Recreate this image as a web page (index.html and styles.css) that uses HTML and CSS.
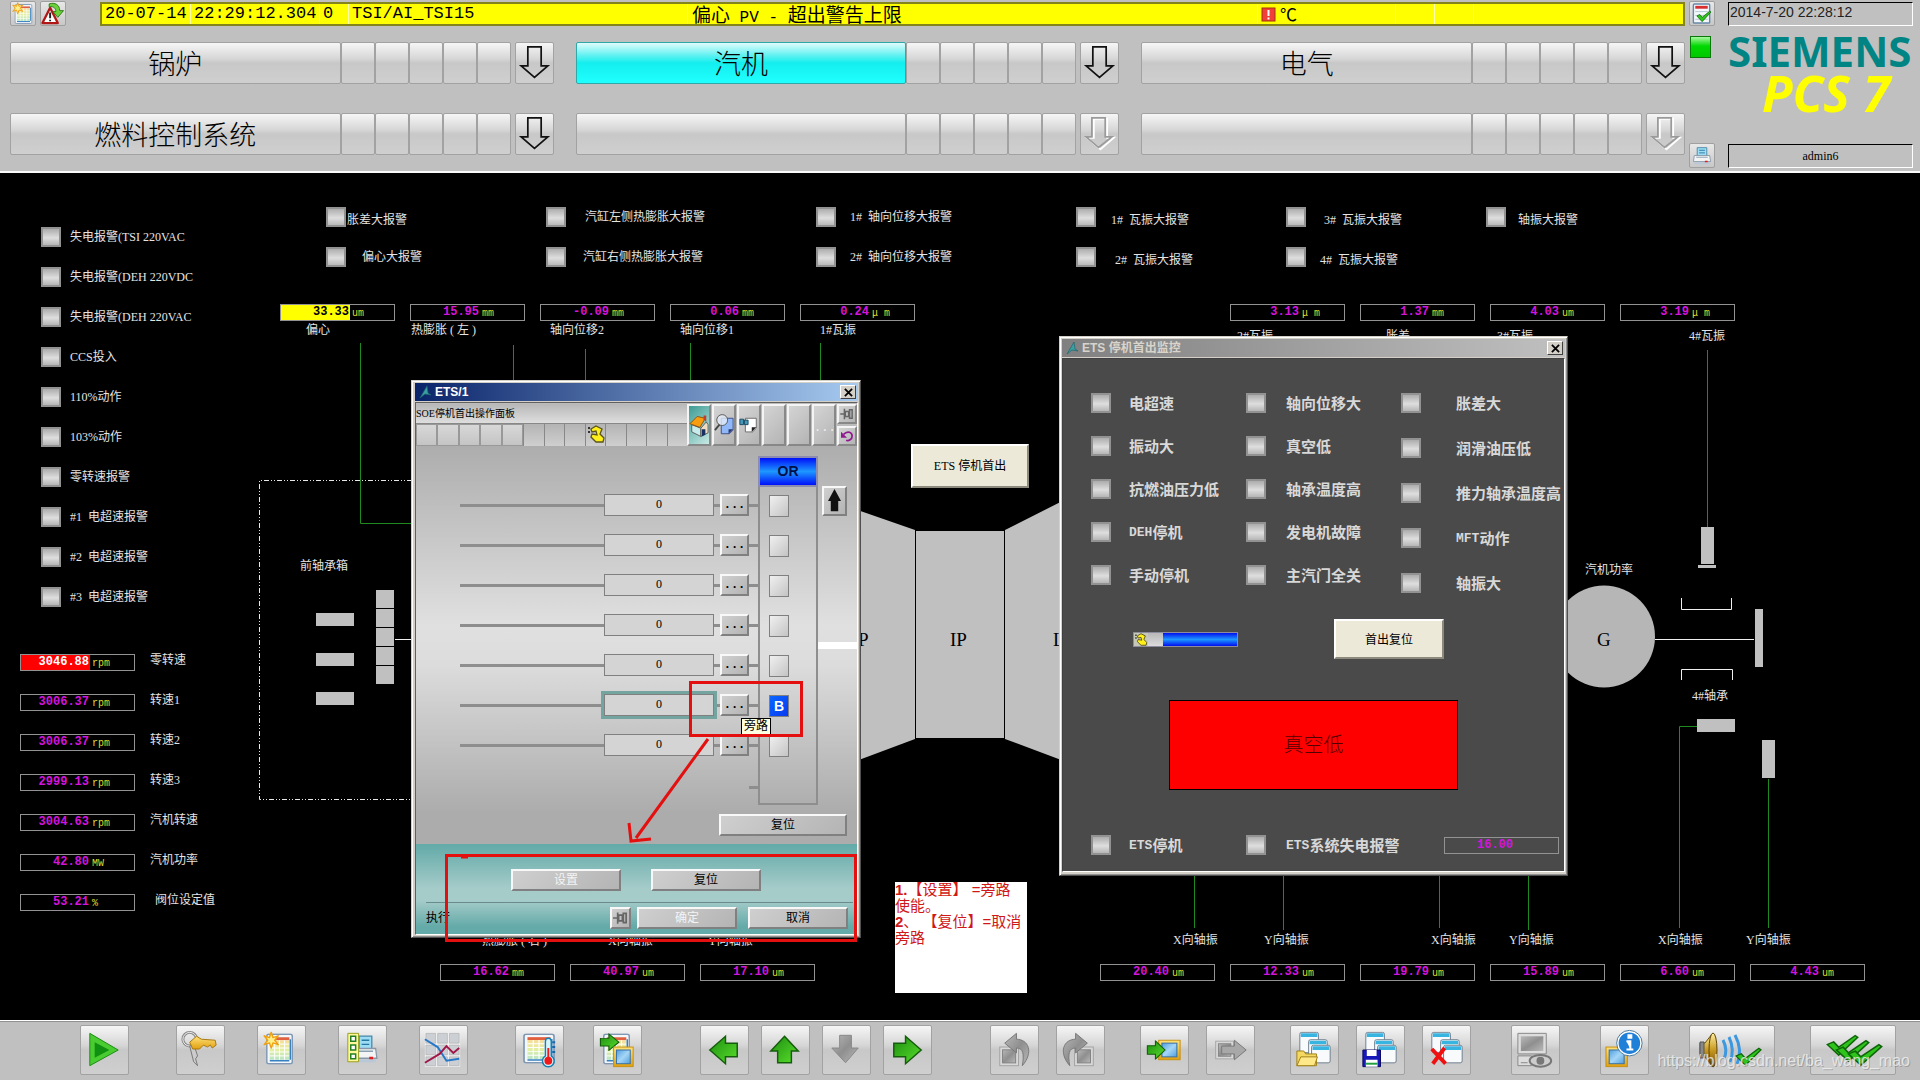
FILE: index.html
```html
<!DOCTYPE html>
<html lang="zh-CN">
<head>
<meta charset="utf-8">
<title>SIEMENS PCS 7</title>
<link rel="stylesheet" href="styles.css">
</head>
<body>
<svg class="defs" aria-hidden="true">
  <defs>
    <linearGradient id="green" x1="0" y1="0" x2="1" y2="1"><stop offset="0" stop-color="#1c8c10"/><stop offset="1" stop-color="#5ae02c"/></linearGradient>
    <linearGradient id="gold" x1="0" y1="0" x2="0" y2="1"><stop offset="0" stop-color="#ffe27a"/><stop offset="1" stop-color="#e0a010"/></linearGradient>
    <linearGradient id="brass" x1="0" y1="0" x2="0" y2="1"><stop offset="0" stop-color="#fff0a0"/><stop offset=".5" stop-color="#c89820"/><stop offset="1" stop-color="#705008"/></linearGradient>
    <linearGradient id="sky" x1="0" y1="0" x2="1" y2="1"><stop offset="0" stop-color="#4f9fe0"/><stop offset=".5" stop-color="#a5d6f6"/><stop offset="1" stop-color="#4f9fe0"/></linearGradient>
    <linearGradient id="cells" x1="0" y1="0" x2="0" y2="1"><stop offset="0" stop-color="#f8dc9a"/><stop offset=".5" stop-color="#e2f0a0"/><stop offset="1" stop-color="#b8e4c8"/></linearGradient>
    <linearGradient id="grey" x1="0" y1="0" x2="1" y2="1"><stop offset="0" stop-color="#b8b8b8"/><stop offset=".5" stop-color="#8f8f8f"/><stop offset="1" stop-color="#b8b8b8"/></linearGradient>
    <linearGradient id="lampfill" x1="0" y1="0" x2="0" y2="1"><stop offset="0" stop-color="#a8a8a8"/><stop offset=".55" stop-color="#dedede"/><stop offset="1" stop-color="#b4b4b4"/></linearGradient>
    <symbol id="sheet" viewBox="0 0 28 32" preserveAspectRatio="none">
      <rect x="1" y="1" width="26" height="30" rx="2" fill="#f4f8fc" stroke="#8098b4" stroke-width="1.5"/>
      <rect x="4" y="4" width="20" height="3" fill="#e06040"/>
      <rect x="4" y="7" width="20" height="20" fill="url(#cells)"/>
      <path d="M4 11H24M4 15H24M4 19H24M4 23H24M9 7V27M14 7V27M19 7V27" stroke="#fff" stroke-width="1"/>
      <path d="M4 28H24M25 6V27" stroke="#3880c0" stroke-width="1.5"/>
    </symbol>
    <symbol id="star" viewBox="0 0 20 20">
      <path d="M10 1L12 7L18 5L14 10L18 15L12 13L10 19L8 13L2 15L6 10L2 5L8 7Z" fill="#fff08a" stroke="#f0a010" stroke-width="1.6" stroke-linejoin="round"/>
    </symbol>
    <symbol id="frame" viewBox="0 0 22 22" preserveAspectRatio="none">
      <rect x="1" y="1" width="20" height="20" fill="url(#gold)" stroke="#c89010"/>
      <rect x="4" y="4" width="14" height="14" fill="url(#sky)" stroke="#3870a8"/>
    </symbol>
    <symbol id="frame-off" viewBox="0 0 22 22">
      <rect x="1" y="1" width="20" height="20" fill="#d8d8d8" stroke="#a0a0a0"/>
      <rect x="4" y="4" width="14" height="14" fill="url(#grey)" stroke="#808080"/>
    </symbol>
    <symbol id="go" viewBox="0 0 28 28" preserveAspectRatio="none">
      <path d="M2 8H13V1L26 14L13 27V20H2Z" fill="url(#green)" stroke="#155c0c" stroke-width="1.5"/>
    </symbol>
    <symbol id="tick" viewBox="0 0 26 26" preserveAspectRatio="none">
      <path d="M1 13L6 10L10 16L23 3L25 5L10 25Z" fill="#2ec41c" stroke="#0e6408" stroke-width="1.4"/>
    </symbol>
    <symbol id="panes" viewBox="0 0 34 36" preserveAspectRatio="none">
      <g fill="#f8fafc" stroke="#6c7c8c"><rect x="2" y="1" width="19" height="22" rx="2"/><rect x="11" y="9" width="19" height="20" rx="2"/><rect x="14" y="15" width="19" height="19" rx="2"/></g>
      <path d="M3 4H20M12 12H29M15 18H32" stroke="#38b4e0" stroke-width="4"/>
    </symbol>
    <symbol id="printer" viewBox="0 0 20 22" preserveAspectRatio="none">
      <path d="M5 2H15V12H5Z" fill="#9cdcf4" stroke="#4888a8"/><path d="M7 5H13M7 8H13" stroke="#2878a0"/>
      <path d="M2 11H18L19 18H1Z" fill="#f4f4f4" stroke="#8898a8"/><path d="M4 13H16" stroke="#88a0b0"/><path d="M13 18H16" stroke="#e02020" stroke-width="2"/><path d="M2 20H18" stroke="#b8c8d8" stroke-width="2"/>
    </symbol>
    <symbol id="pin" viewBox="0 0 16 14">
      <path d="M0 7H5M5 1V13M6 4H10V10H6ZM11 2H14V12H11Z" fill="none" stroke="#666" stroke-width="1.8"/>
    </symbol>
    <symbol id="hand" viewBox="0 0 18 18">
      <path d="M1 3H3M1 7H3" stroke="#333" stroke-width="2"/>
      <path d="M4 4L9 1L15 4L13 9L17 13L16 17H9L4 12L5 9L10 10L9 6L5 7Z" fill="#fff01c" stroke="#5a5418" stroke-width="1.3"/>
    </symbol>
    <symbol id="mark" viewBox="0 0 12 14">
      <path d="M1 13L8 1L9 8L12 10L6 9Z" fill="#3aa0a0" stroke="#1c6470" stroke-width=".7"/>
    </symbol>
    <symbol id="down" viewBox="0 0 38 42">
      <path d="M12 4H26V24H33L19 36L5 24H12Z" fill="none" stroke="#111" stroke-width="1.8"/>
    </symbol>
    <symbol id="down-off" viewBox="0 0 38 42">
      <path d="M13 5H27V25H34L20 37L6 25H13Z" fill="none" stroke="#fff" stroke-width="2"/>
      <path d="M11 4H25V24H32L18 35L5 24H11Z" fill="none" stroke="#9a9a9a" stroke-width="1.8"/>
    </symbol>
    <symbol id="lamp" viewBox="0 0 20 20">
      <rect x="1" y="1" width="18" height="18" fill="url(#lampfill)" stroke="#929292" stroke-width="2"/>
    </symbol>
  </defs>
</svg>

<header class="overview">
  <div class="overview-main">
    <div class="alarm-row">
      <button class="mini" aria-label="报警列表"><svg viewBox="0 0 24 24"><use href="#sheet" x="3" y="2" width="19" height="21"/><use href="#star" x="0" y="0" width="13" height="13"/></svg></button>
      <button class="mini" aria-label="报警回路"><svg viewBox="0 0 24 24"><path d="M9 6L17 22H1Z" fill="#fff" stroke="#b01818" stroke-width="2.4" stroke-linejoin="round"/><path d="M9 11V17M9 18.500V20" stroke="#222" stroke-width="2"/><path d="M8 2C14 0 19 3 19 9H23L17 16L12 10H15C15 7 13 4 8 5Z" fill="#6cd03c" stroke="#2c7c14"/></svg></button>
      <div class="alarm-line">
        <span class="a-date">20-07-14</span><span class="a-time">22:29:12.304</span><span class="a-num">0</span><span class="a-tag">TSI/AI_TSI15</span><span class="a-text">偏心<span class="ascii"> PV - </span>超出警告上限</span>
        <span class="a-unit"><svg width="15" height="15" viewBox="0 0 15 15"><rect x="1" y="1" width="13" height="13" fill="#f04038" stroke="#a03010"/><path d="M7.500 3V9M7.500 10.500V12.500" stroke="#fff" stroke-width="2"/></svg>℃</span><span class="a-gap"></span><span class="a-gap"></span><span class="a-rest"></span>
      </div>
    </div>
    <nav class="areas">
      <div class="area"><button class="area-name">锅炉</button><i></i><i></i><i></i><i></i><i></i><button class="area-down" aria-label="展开"><svg><use href="#down"/></svg></button></div>
      <div class="area"><button class="area-name active">汽机</button><i></i><i></i><i></i><i></i><i></i><button class="area-down" aria-label="展开"><svg><use href="#down"/></svg></button></div>
      <div class="area"><button class="area-name">电气</button><i></i><i></i><i></i><i></i><i></i><button class="area-down" aria-label="展开"><svg><use href="#down"/></svg></button></div>
      <div class="area"><button class="area-name">燃料控制系统</button><i></i><i></i><i></i><i></i><i></i><button class="area-down" aria-label="展开"><svg><use href="#down"/></svg></button></div>
      <div class="area"><button class="area-name" aria-label="空"></button><i></i><i></i><i></i><i></i><i></i><button class="area-down" aria-label="展开" disabled><svg><use href="#down-off"/></svg></button></div>
      <div class="area"><button class="area-name" aria-label="空"></button><i></i><i></i><i></i><i></i><i></i><button class="area-down" aria-label="展开" disabled><svg><use href="#down-off"/></svg></button></div>
    </nav>
  </div>
  <div class="overview-tools">
    <button class="mini" aria-label="确认"><svg viewBox="0 0 24 24"><rect x="3" y="2" width="17" height="20" rx="1" fill="#f4f8fc" stroke="#6888a8" stroke-width="1.500"/><path d="M5 5.500H18" stroke="#d83030" stroke-width="3"/><path d="M5 10H18M5 14H18M5 18H18" stroke="#b8c4d0"/><use href="#tick" x="6" y="8" width="16" height="13"/></svg></button>
    <span class="conn"></span>
    <button class="mini printer" aria-label="打印"><svg viewBox="0 0 24 24"><use href="#printer" x="2" y="2" width="20" height="20"/></svg></button>
  </div>
  <div class="overview-brand">
    <div class="sunken clock">2014-7-20 22:28:12</div>
    <div class="siemens">SIEMENS</div>
    <div class="pcs">PCS 7</div>
    <div class="sunken user">admin6</div>
  </div>
</header>

<main class="mimic">
  <svg class="drawing" viewBox="0 173 1920 847" preserveAspectRatio="xMinYMin meet">
    <g class="pipe">
      <path d="M360.500 343V523.500H412M513.500 345V382M585.500 349V382M690.500 343V382M820.500 343V382"/>
      <path d="M1707.500 350V528M1697 726.500H1679.500V928M1768.500 779V928M1194.500 876V928M1283.500 876V930M1439.500 876V928M1528.500 876V930"/>
    </g>
    <path class="housing" d="M412 480.500H259.500V799.500H412"/>
    <g class="metal">
      <path d="M316 613H354V626H316ZM316 653H354V666H316ZM316 692H354V705H316Z"/>
      <path d="M376 590H394V608H376ZM376 609H394V627H376ZM376 628H394V646H376ZM376 647H394V665H376ZM376 666H394V684H376Z"/>
      <path d="M800 490L915 530V739L800 782ZM1005 530L1120 472V782L1005 739Z"/>
      <rect x="915.500" y="530.500" width="89" height="208" stroke="#000"/>
      <path d="M1701 527H1714V564H1701ZM1698 565H1716V568H1698ZM1755 609H1763V667H1755ZM1697 719H1735V732H1697ZM1762 740H1775V778H1762Z"/>
    </g>
    <circle class="generator" cx="1604" cy="636.500" r="51"/>
    <path class="shaft" d="M395 639.500H412M1655 639.500H1754M1681.500 598V609.500H1731.500V598M1681.500 680V669.500H1732.500V680"/>
    <g class="stage"><text x="858" y="646">P</text><text x="950" y="646">IP</text><text x="1053" y="646">L</text><text x="1597" y="646">G</text></g>
    <g>
      <use href="#lamp" x="326" y="207" width="20" height="20"/><use href="#lamp" x="326" y="247" width="20" height="20"/>
      <use href="#lamp" x="546" y="207" width="20" height="20"/><use href="#lamp" x="546" y="247" width="20" height="20"/>
      <use href="#lamp" x="816" y="207" width="20" height="20"/><use href="#lamp" x="816" y="247" width="20" height="20"/>
      <use href="#lamp" x="1076" y="207" width="20" height="20"/><use href="#lamp" x="1076" y="247" width="20" height="20"/>
      <use href="#lamp" x="1286" y="207" width="20" height="20"/><use href="#lamp" x="1286" y="247" width="20" height="20"/>
      <use href="#lamp" x="1486" y="207" width="20" height="20"/>
    </g>
    <g class="tag">
      <text x="347" y="224">胀差大报警</text><text x="362" y="261">偏心大报警</text>
      <text x="585" y="221">汽缸左侧热膨胀大报警</text><text x="583" y="261">汽缸右侧热膨胀大报警</text>
      <text x="850" y="221">1#  轴向位移大报警</text><text x="850" y="261">2#  轴向位移大报警</text>
      <text x="1111" y="224">1#  瓦振大报警</text><text x="1115" y="264">2#  瓦振大报警</text>
      <text x="1324" y="224">3#  瓦振大报警</text><text x="1320" y="264">4#  瓦振大报警</text>
      <text x="1518" y="224">轴振大报警</text>
      <text x="306" y="334">偏心</text><text x="411" y="334">热膨胀 ( 左 )</text><text x="550" y="334">轴向位移2</text><text x="680" y="334">轴向位移1</text><text x="820" y="334">1#瓦振</text>
      <text x="1237" y="340">2#瓦振</text><text x="1386" y="340">胀差</text><text x="1497" y="340">3#瓦振</text><text x="1689" y="340">4#瓦振</text>
      <text x="300" y="570">前轴承箱</text><text x="1585" y="574">汽机功率</text><text x="1692" y="700">4#轴承</text>
      <text x="482" y="945">热膨胀 ( 右 )</text><text x="608" y="945">X向轴振</text><text x="708" y="945">Y向轴振</text>
      <text x="1173" y="944">X向轴振</text><text x="1264" y="944">Y向轴振</text><text x="1431" y="944">X向轴振</text><text x="1509" y="944">Y向轴振</text>
      <text x="1658" y="944">X向轴振</text><text x="1746" y="944">Y向轴振</text>
    </g>
  </svg>

  <ul class="lamps">
    <li><span class="lamp"></span>失电报警(TSI 220VAC</li>
    <li><span class="lamp"></span>失电报警(DEH 220VDC</li>
    <li><span class="lamp"></span>失电报警(DEH 220VAC</li>
    <li><span class="lamp"></span>CCS投入</li>
    <li><span class="lamp"></span>110%动作</li>
    <li><span class="lamp"></span>103%动作</li>
    <li><span class="lamp"></span>零转速报警</li>
    <li><span class="lamp"></span>#1  电超速报警</li>
    <li><span class="lamp"></span>#2  电超速报警</li>
    <li><span class="lamp"></span>#3  电超速报警</li>
  </ul>

  <ul class="readings">
    <li><span class="meter alarm"><b>3046.88</b><i>rpm</i></span>零转速</li>
    <li><span class="meter"><b>3006.37</b><i>rpm</i></span>转速1</li>
    <li><span class="meter"><b>3006.37</b><i>rpm</i></span>转速2</li>
    <li><span class="meter"><b>2999.13</b><i>rpm</i></span>转速3</li>
    <li><span class="meter"><b>3004.63</b><i>rpm</i></span>汽机转速</li>
    <li><span class="meter"><b>42.80</b><i>MW</i></span>汽机功率</li>
    <li><span class="meter"><b>53.21</b><i>%</i></span> 阀位设定值</li>
  </ul>

  <div class="meters top-left">
    <span class="meter warn"><b>33.33</b><i>um</i></span><span class="meter"><b>15.95</b><i>mm</i></span><span class="meter"><b>-0.09</b><i>mm</i></span><span class="meter"><b>0.06</b><i>mm</i></span><span class="meter"><b>0.24</b><i>μ m</i></span>
  </div>
  <div class="meters top-right">
    <span class="meter"><b>3.13</b><i>μ m</i></span><span class="meter"><b>1.37</b><i>mm</i></span><span class="meter"><b>4.03</b><i>um</i></span><span class="meter"><b>3.19</b><i>μ m</i></span>
  </div>
  <div class="meters bottom-left">
    <span class="meter"><b>16.62</b><i>mm</i></span><span class="meter"><b>40.97</b><i>um</i></span><span class="meter"><b>17.10</b><i>um</i></span>
  </div>
  <div class="meters bottom-right">
    <span class="meter"><b>20.40</b><i>um</i></span><span class="meter"><b>12.33</b><i>um</i></span><span class="meter"><b>19.79</b><i>um</i></span><span class="meter"><b>15.89</b><i>um</i></span><span class="meter"><b>6.60</b><i>um</i></span><span class="meter"><b>4.43</b><i>um</i></span>
  </div>

  <button class="classic open-first-out">ETS 停机首出</button>

  <section class="window panel">
    <div class="titlebar"><svg width="12" height="14"><use href="#mark"/></svg><h2>ETS/1</h2><button class="close" aria-label="关闭"><svg viewBox="0 0 10 10"><path d="M1 1L9 9M9 1L1 9" stroke="#000" stroke-width="2"/></svg></button></div>
    <div class="client">
      <div class="panel-head">
        <div class="panel-title">
          <div class="block-name">SOE停机首出操作面板</div>
          <div class="flags"><i class="up"></i><i class="up"></i><i class="up"></i><i class="up"></i><i class="up"></i><i></i><i></i><i></i><i><svg viewBox="0 0 18 18"><use href="#hand"/></svg></i><i></i><i></i><i></i><i></i></div>
        </div>
        <div class="views">
          <button class="view current" aria-label="标准"><svg viewBox="0 0 22 30"><path d="M3 15L13 19V28L3 23Z" fill="#c8ecec" stroke="#555"/><path d="M13 19L19 12L21 15V24L13 28Z" fill="#f0dcc0" stroke="#555"/><path d="M1 14L9 6L18 8L12 18Z" fill="#f89c10" stroke="#8c5008"/><path d="M16 5H19V12L16 9Z" fill="#c04030"/><path d="M14 20H18V26L14 28Z" fill="#183060"/></svg></button>
          <button class="view" aria-label="查看"><svg viewBox="0 0 22 30"><path d="M8 8H21V21L17 25H8Z" fill="#90b8f8" stroke="#3a4a80"/><path d="M21 20L16 25V20Z" fill="#283870"/><circle cx="9" cy="10" r="6" fill="#e4ecf8" fill-opacity=".8" stroke="#555"/><path d="M6 15L1 21" stroke="#444" stroke-width="2"/></svg></button>
          <button class="view" aria-label="固定页"><svg viewBox="0 0 22 30"><path d="M7 8H19V19L15 23H7Z" fill="#fff" stroke="#666"/><path d="M19 18L14 23V18Z" fill="#222"/><path d="M1 9V15H5V9ZM6 10H10V15H6Z" fill="#4898b8" stroke="#184860"/></svg></button>
          <button class="view" aria-label="空"></button>
          <button class="view" aria-label="空"></button>
          <button class="view more">...</button>
          <div class="view-tools">
            <button class="view" aria-label="固定"><svg viewBox="0 0 16 14"><use href="#pin"/></svg></button>
            <button class="view" aria-label="返回"><svg viewBox="0 0 16 14"><path d="M1 2V9H8Z" fill="#901890"/><path d="M4 5C9 0 14 3 14 7C14 11 10 13 7 12" fill="none" stroke="#901890" stroke-width="2"/></svg></button>
          </div>
        </div>
      </div>
      <div class="logic">
        <div class="inputs">
          <div class="input"><output>0</output><button class="face">...</button></div>
          <div class="input"><output>0</output><button class="face">...</button></div>
          <div class="input"><output>0</output><button class="face">...</button></div>
          <div class="input"><output>0</output><button class="face">...</button></div>
          <div class="input"><output>0</output><button class="face">...</button></div>
          <div class="input selected"><output>0</output><button class="face">...</button></div>
          <div class="input"><output>0</output><button class="face">...</button></div>
          <div class="stub"></div>
        </div>
        <div class="gate">
          <div class="gate-name">OR</div>
          <div class="gate-body"><span class="bit"></span><span class="bit"></span><span class="bit"></span><span class="bit"></span><span class="bit"></span><span class="bit bypass">B</span><span class="bit"></span></div>
        </div>
        <div class="result">
          <button class="face" aria-label="上移"><svg viewBox="0 0 22 28"><path d="M11 1L18 14H15V25H7V14H4Z" fill="#111"/></svg></button>
          <span class="outlet"></span>
        </div>
        <button class="face logic-reset">复位</button>
      </div>
      <div class="operate">
        <div class="operate-set"><button class="face" disabled>设置</button><button class="face">复位</button></div>
        <div class="operate-run"><span>执行</span><button class="face pin" aria-label="固定"><svg viewBox="0 0 16 14"><use href="#pin"/></svg></button><button class="face" disabled>确定</button><button class="face focus">取消</button></div>
      </div>
    </div>
    <div class="tip" role="tooltip">旁路</div>
  </section>

  <section class="window first-out">
    <div class="titlebar"><svg width="12" height="14"><use href="#mark"/></svg><h2>ETS 停机首出监控</h2><button class="close" aria-label="关闭"><svg viewBox="0 0 10 10"><path d="M1 1L9 9M9 1L1 9" stroke="#000" stroke-width="2"/></svg></button></div>
    <div class="client">
      <div class="causes">
        <ul>
          <li><span class="lamp"></span>电超速</li><li><span class="lamp"></span>振动大</li><li><span class="lamp"></span>抗燃油压力低</li><li><span class="lamp"></span><span class="ascii">DEH</span>停机</li><li><span class="lamp"></span>手动停机</li>
        </ul>
        <ul>
          <li><span class="lamp"></span>轴向位移大</li><li><span class="lamp"></span>真空低</li><li><span class="lamp"></span>轴承温度高</li><li><span class="lamp"></span>发电机故障</li><li><span class="lamp"></span>主汽门全关</li>
        </ul>
        <ul>
          <li><span class="lamp"></span>胀差大</li><li><span class="lamp"></span>润滑油压低</li><li><span class="lamp"></span>推力轴承温度高</li><li><span class="lamp"></span><span class="ascii">MFT</span>动作</li><li><span class="lamp"></span>轴振大</li>
        </ul>
      </div>
      <div class="reset-row">
        <div class="mode"><svg viewBox="0 0 18 18"><use href="#hand"/></svg><i></i><b></b></div>
        <button class="classic">首出复位</button>
      </div>
      <div class="cause">真空低</div>
      <div class="causes-foot">
        <div class="state"><span class="lamp"></span><span class="ascii">ETS</span>停机</div>
        <div class="state"><span class="lamp"></span><span class="ascii">ETS</span>系统失电报警</div>
        <span class="meter"><b>16.00</b></span>
      </div>
    </div>
  </section>

  <p class="note"><b>1.</b>【设置】 =旁路<br>使能。<br><b>2</b>、 【复位】=取消<br>旁路</p>

  <svg class="markup" viewBox="0 173 1920 847" preserveAspectRatio="xMinYMin meet">
    <path d="M690.500 682.500H801.500V735.500H690.500ZM446.500 855.500H855.500V940.500H446.500ZM708 739L636 838M629 823L631 841L651 839"/>
    <path d="M461 857H468"/>
  </svg>
</main>

<footer class="keys">
  <div class="set"><button class="key" aria-label="运行"><svg viewBox="0 0 48 48"><path d="M9 7L38 24L9 40Z" fill="#48cc30" stroke="#1c8c14"/><path d="M14 16L29 24L14 32Z" fill="#109010"/></svg></button></div>
  <div class="set s47 g32">
    <button class="key" aria-label="登录"><svg viewBox="0 0 48 48"><circle cx="13" cy="13" r="7" fill="none" stroke="#888" stroke-width="3"/><circle cx="13" cy="13" r="7" fill="none" stroke="#eee"/><path d="M17 18L21 30L19 33L21 40L17 36L13 20Z" fill="#ccc" stroke="#777"/><path d="M13 16L20 10L25 13L39 14L40 19L36 22L34 19L31 21L27 19L23 23L16 23Z" fill="url(#gold)" stroke="#a87810"/></svg></button>
    <button class="key" aria-label="新建报表"><svg viewBox="0 0 48 48"><use href="#sheet" x="8" y="7" width="28" height="32"/><use href="#star" x="4" y="5" width="19" height="18"/></svg></button>
    <button class="key" aria-label="打印报表"><svg viewBox="0 0 48 48"><use href="#printer" x="14" y="7" width="26" height="31"/><path d="M9 7H20V36H9Z" fill="#fff79a" stroke="#98a018"/><path d="M12 10H17V15H12ZM12 19H17V24H12ZM12 28H17V33H12Z" fill="#fff" stroke="#228022" stroke-width="1.500"/></svg></button>
    <button class="key" aria-label="趋势"><svg viewBox="0 0 48 48"><path d="M5 6H41V41H5Z" fill="#f4f4f4"/><path d="M6 7H16V17H6ZM18 7H28V17H18ZM30 7H40V17H30ZM6 19H16V29H6ZM18 19H28V29H18ZM30 19H40V29H30ZM6 31H16V40H6ZM18 31H28V40H18ZM30 31H40V40H30Z" fill="#ccd0d4" stroke="#aaa" stroke-width=".6"/><path d="M5 13L18 21L27 35L40 33" fill="none" stroke="#2878c8" stroke-width="2"/><path d="M5 37L20 28L27 20L34 27L40 22" fill="none" stroke="#a01848" stroke-width="2"/></svg></button>
  </div>
  <div class="set s47 g29">
    <button class="key" aria-label="测量值"><svg viewBox="0 0 48 48"><use href="#sheet" x="7" y="7" width="33" height="31"/><path d="M30 15a3 3 0 0 1 6 0V30a6 6 0 1 1-6 0Z" fill="#d8f4fc" stroke="#1880b0" stroke-width="1.500"/><path d="M33 22V34" stroke="#f01818" stroke-width="2"/><circle cx="33" cy="35" r="4" fill="#f01818"/><path d="M37 16H40M37 21H40M37 26H40" stroke="#1868a8" stroke-width="2"/></svg></button>
    <button class="key" aria-label="画面切换"><svg viewBox="0 0 48 48"><use href="#sheet" x="9" y="7" width="28" height="32"/><use href="#go" x="5" y="7" width="22" height="18"/><use href="#frame" x="19" y="20" width="22" height="22"/></svg></button>
  </div>
  <div class="set s58 g12">
    <button class="key" aria-label="左"><svg viewBox="0 0 48 48"><path d="M9 24L25 10V17H37V31H25V38Z" fill="url(#green)" stroke="#155c0c" stroke-width="1.500"/></svg></button>
    <button class="key" aria-label="上"><svg viewBox="0 0 48 48"><path d="M23 10L37 25H30V37H16V25H9Z" fill="url(#green)" stroke="#155c0c" stroke-width="1.500"/></svg></button>
    <button class="key" aria-label="下" disabled><svg viewBox="0 0 48 48"><path d="M17 9H29V22H36L23 37L9 22H17Z" fill="url(#grey)" stroke="#888"/></svg></button>
    <button class="key" aria-label="右"><svg viewBox="0 0 48 48"><path d="M38 24L22 10V17H10V31H22V38Z" fill="url(#green)" stroke="#155c0c" stroke-width="1.500"/></svg></button>
  </div>
  <div class="set s58 g17">
    <button class="key" aria-label="后退" disabled><svg viewBox="0 0 48 48"><use href="#frame-off" x="8" y="20" width="21" height="21"/><path d="M14 17L26 7V13C38 13 44 26 32 40C34 28 33 22 26 22V27Z" fill="url(#grey)" stroke="#787878"/></svg></button>
    <button class="key" aria-label="前进" disabled><svg viewBox="0 0 48 48"><use href="#frame-off" x="17" y="20" width="21" height="21"/><path d="M31 17L19 7V13C7 13 1 26 13 40C11 28 12 22 19 22V27Z" fill="url(#grey)" stroke="#787878"/></svg></button>
  </div>
  <div class="set s35 g17">
    <button class="key" aria-label="读入画面"><svg viewBox="0 0 48 48"><use href="#frame" x="17" y="13" width="24" height="22"/><use href="#go" x="5" y="14" width="21" height="20"/></svg></button>
    <button class="key" aria-label="输出画面" disabled><svg viewBox="0 0 48 48"><use href="#frame-off" x="8" y="14" width="20" height="20"/><path d="M15 20H28V14L40 24L28 34V28H15Z" fill="#a8a8a8" stroke="#787878"/></svg></button>
  </div>
  <div class="set s35 g17">
    <button class="key" aria-label="打开组合"><svg viewBox="0 0 48 48"><use href="#panes" x="7" y="5" width="34" height="34"/><path d="M6 25H13L15 28H26V40H6Z" fill="#f4d860" stroke="#a08018"/><path d="M6 40L10 31H27L24 40Z" fill="#ffe888" stroke="#a08018"/></svg></button>
    <button class="key" aria-label="保存组合"><svg viewBox="0 0 48 48"><use href="#panes" x="7" y="5" width="34" height="34"/><path d="M6 24H24V41H6Z" fill="#1818b8" stroke="#080860"/><path d="M10 24H20V30H10ZM9 34H21V41H9Z" fill="#fff"/><path d="M9 38H21" stroke="#20a040" stroke-width="2"/></svg></button>
    <button class="key" aria-label="删除组合"><svg viewBox="0 0 48 48"><use href="#panes" x="7" y="5" width="34" height="34"/><path d="M9 23L23 38M22 22L10 38" stroke="#f01010" stroke-width="4"/></svg></button>
  </div>
  <div class="set s40"><button class="key" aria-label="屏幕" disabled><svg viewBox="0 0 48 48"><path d="M6 7H35V28H6Z" fill="#ddd" stroke="#888"/><path d="M9 10H32V25H9Z" fill="url(#grey)"/><path d="M6 30H20V40H6ZM9 37H16" fill="#ddd" stroke="#888"/><ellipse cx="29" cy="35" rx="11" ry="6" fill="#ccc" stroke="#777" stroke-width="2"/><circle cx="29" cy="35" r="4" fill="#777"/></svg></button></div>
  <div class="set s40"><button class="key" aria-label="画面信息"><svg viewBox="0 0 48 48"><use href="#frame" x="4" y="20" width="24" height="22"/><circle cx="29" cy="17" r="12" fill="#2080d8" stroke="#fff" stroke-width="2"/><circle cx="29" cy="17" r="13" fill="none" stroke="#48789c"/><path d="M26 15H30V23M26 23.500H33M28 9H31V11.500H28Z" fill="#fff" stroke="#fff" stroke-width="2"/></svg></button></div>
  <div class="set s40"><button class="key broad" aria-label="声音确认"><svg viewBox="0 0 84 48"><path d="M10 17H15L22 8V40L15 31H10Z" fill="url(#brass)" stroke="#705010"/><ellipse cx="23" cy="24" rx="4" ry="17" fill="url(#brass)" stroke="#5c4408"/><path d="M10 16H14V32H10Z" fill="#888" stroke="#555"/><path d="M33 14Q38 24 34 33M39 11Q45 24 40 36M45 9Q53 24 47 38" fill="none" stroke="#3c98e0" stroke-width="3"/><use href="#tick" x="45" y="20" width="27" height="20"/></svg></button></div>
  <div class="set s35"><button class="key broad" aria-label="全部确认"><svg viewBox="0 0 84 48"><use href="#tick" x="15" y="7" width="33" height="23"/><use href="#tick" x="24" y="12" width="35" height="24"/><use href="#tick" x="36" y="16" width="36" height="24"/></svg></button></div>
  <span class="source">https://blog.csdn.net/ba_wang_mao</span>
</footer>
</body>
</html>
```
FILE: styles.css
```css
* { box-sizing: border-box; }

body {
  margin: 0;
  min-height: 100vh;
  display: flex;
  flex-direction: column;
  background: #000;
  font: 12px/16px "Liberation Serif", "Noto Sans CJK SC", serif;
}

button { padding: 0; font: inherit; color: inherit; }
ul { list-style: none; margin: 0; padding: 0; }
.defs { position: absolute; width: 0; height: 0; }

/* ---------- overview bar ---------- */
.overview {
  display: flex;
  height: 173px;
  padding: 1px 7px 0 10px;
  background: #c0c0c0;
  border-bottom: 2px solid #f8f8f8;
}
.overview-main { flex: 1; display: flex; flex-direction: column; gap: 16px; }

.mini {
  flex: none;
  width: 26px;
  height: 25px;
  border: 1px solid #a0a0a0;
  border-radius: 2px;
  background: linear-gradient(#e8e8e8, #c8c8c8);
}
.mini svg { display: block; width: 24px; height: 23px; }

.alarm-row { display: flex; gap: 4px; }
.alarm-line {
  flex: 1;
  display: flex;
  height: 24px;
  margin: 1px 0 0 30px;
  border: 2px solid #84841c;
  background: #ff0;
  font: 17px/20px "Liberation Mono", monospace;
  white-space: pre;
}
.alarm-line > span { flex: none; padding-left: 3px; border-right: 1px solid #ffffb0; }
.alarm-line .a-date { width: 89px; }
.alarm-line .a-time { width: 129px; }
.alarm-line .a-num { width: 29px; }
.alarm-line .a-tag { width: 339px; }
.alarm-line .a-text { flex: 1; padding-left: 4px; font: 19px/20px "Noto Sans CJK SC", sans-serif; }
.alarm-line .a-unit { display: flex; align-items: center; gap: 4px; width: 138px; font-family: "Noto Sans CJK SC", sans-serif; }
.alarm-line .a-gap { width: 39px; }
.alarm-line .a-rest { width: 209px; border: 0; }
.a-text .ascii { font: 16px/20px "Liberation Mono", monospace; }

.areas { display: grid; grid-template-columns: repeat(3, 1fr); gap: 29px 22px; }
.area { display: flex; height: 42px; }
.area-name, .area i, .area-down, .key {
  border: 1px solid #a2a2a2;
  border-radius: 2px;
  background: linear-gradient(#f6f6f6, #d6d6d6 40%, #c8c8c8 50%, #cfcfcf);
}
.area-name { flex: 1; font: 300 27px/34px "Noto Sans CJK SC", sans-serif; }
.area-name.active { border-color: #30a8a8; background: linear-gradient(#e0fcfc, #50f0f0 35%, #14eeee 50%, #20ffff); }
.area i { width: 34px; }
.area-down { width: 39px; margin-left: 4px; }
.area-down svg { display: block; width: 37px; height: 40px; }

.overview-tools { display: flex; flex-direction: column; margin-left: 4px; }
.conn { width: 21px; height: 22px; margin: 10px 1px; border: 1px solid #087808; background: linear-gradient(#a8f8a0, #00d800 45%, #00c800); }
.printer { margin-top: auto; margin-bottom: 3px; }

.overview-brand { display: flex; flex-direction: column; width: 185px; margin-left: 13px; padding: 1px 0 3px; }
.sunken { height: 24px; border: 1px solid #000; border-right-color: #fff; border-bottom-color: #fff; }
.clock { padding-left: 1px; font: 14px/19px "Liberation Sans", sans-serif; color: #222; }
.siemens { margin-top: 8px; font: bold 42px/34px "Noto Sans", sans-serif; color: #008484; }
.pcs { margin-top: 6px; padding-left: 34px; font: italic bold 50px/38px "Noto Sans", sans-serif; color: #ff0; white-space: nowrap; }
.user { margin-top: auto; line-height: 22px; text-align: center; }

/* ---------- process mimic ---------- */
.mimic { position: relative; flex: 1; min-height: 847px; color: #e4e4e4; }
.drawing, .markup { position: absolute; inset: 0; width: 100%; height: 100%; }
.pipe path { fill: none; stroke: #1f8a1f; }
.housing { fill: none; stroke: #e8e8e8; stroke-dasharray: 5 2 1 2 1 2; }
.metal { fill: #c0c0c0; }
.generator { fill: #b6b6b6; }
.shaft { fill: none; stroke: #f0f0f0; }
.stage { font-size: 19px; fill: #000; }
.tag { fill: #e4e4e4; }
.tag text { white-space: pre; }
.markup { pointer-events: none; }
.markup path { fill: none; stroke: #e41010; stroke-width: 3; }

.lamp {
  flex: none;
  width: 20px;
  height: 20px;
  border: 2px solid #929292;
  background: linear-gradient(#acacac, #dedede 55%, #b6b6b6);
}
.lamps { position: absolute; left: 41px; top: 54px; display: grid; gap: 20px; }
.lamps li { display: flex; align-items: center; gap: 9px; height: 20px; white-space: pre; }
.readings { position: absolute; left: 20px; top: 481px; display: grid; gap: 23px; }
.readings li { display: flex; gap: 15px; height: 17px; line-height: 13px; }
.readings li:last-child { gap: 20px; }

.meter { flex: none; display: flex; width: 115px; height: 17px; border: 1px solid #929292; }
.meter b { width: 69px; padding-right: 1px; font: bold 12px/15px "Liberation Mono", monospace; text-align: right; color: #d414dc; }
.meter i { padding-left: 2px; font: 10px/18px "Liberation Mono", monospace; color: #dede30; white-space: pre; }
.meter.alarm b { background: #f00; color: #fff; }
.meter.warn b { background: #ff0; color: #000; }
.meters { position: absolute; display: flex; gap: 15px; }
.top-left { left: 280px; top: 131px; }
.top-right { left: 1230px; top: 131px; }
.bottom-left { left: 440px; top: 791px; }
.bottom-right { left: 1100px; top: 791px; }

.classic {
  border: 2px solid;
  border-color: #fff #8c8a7c #8c8a7c #fff;
  background: #ece9d8;
  color: #000;
}
.open-first-out { position: absolute; left: 911px; top: 271px; width: 118px; height: 44px; }

.note {
  position: absolute;
  left: 895px;
  top: 709px;
  width: 132px;
  height: 111px;
  margin: 0;
  background: #fff;
  color: #d01818;
  font: 15px/16px "Liberation Sans", "Noto Sans CJK SC", sans-serif;
  white-space: nowrap;
}

/* ---------- windows ---------- */
.window {
  position: absolute;
  border: 1px solid #d4d0c8;
  border-right-color: #505050;
  border-bottom-color: #505050;
  background: #d4d0c8;
  padding: 2px;
  box-shadow: inset 1px 1px #fff, inset -1px -1px #909090;
}
.titlebar { display: flex; align-items: center; height: 18px; padding: 0 2px 0 4px; gap: 4px; }
.titlebar h2 { flex: 1; margin: 0; font: bold 12px/18px "Liberation Sans", "Noto Sans CJK SC", sans-serif; }
.close { width: 16px; height: 14px; border: 1px solid; border-color: #fff #404040 #404040 #fff; background: #d4d0c8; }
.close svg { display: block; width: 9px; height: 9px; margin: 1px auto; }

.panel { left: 411px; top: 207px; width: 450px; padding-left: 3px; color: #000; }
.panel .titlebar { background: linear-gradient(90deg, #0a246a, #a6caf0); color: #fff; }
.panel .client { margin-top: 1px; border: 1px solid #606060; border-right-color: #fff; border-bottom-color: #fff; }

.panel-head { display: flex; height: 43px; padding-top: 1px; background: #bcbcbc; }
.panel-title { flex: 1; }
.block-name { height: 20px; border-bottom: 1px solid #888; background: linear-gradient(#b8b8b8, #dedede); font-size: 10px; line-height: 19px; }
.flags { display: flex; height: 22px; }
.flags i { flex: 1; border-left: 1px solid #888; background: linear-gradient(#b4b4b4, #cfcfcf); }
.flags .up { border: 1px solid #999; background: linear-gradient(#d8d8d8, #c4c4c4); }
.flags svg { display: block; width: 18px; height: 20px; margin-left: 1px; }
.views { display: flex; gap: 1px; }
.view { width: 24px; border: 2px solid; border-color: #f4f4f4 #888 #888 #f4f4f4; background: linear-gradient(135deg, #d4d4d4, #b4b4b4); }
.view svg { display: block; width: 20px; }
.view.current { background: linear-gradient(135deg, #3c9c94, #c8e8e4); }
.view.more { padding-top: 6px; color: #eee; font-family: "Liberation Mono", monospace; }
.view-tools { display: flex; flex-direction: column; gap: 2px; width: 20px; }
.view-tools .view { flex: 1; width: 20px; }
.view-tools svg { width: 14px; height: 12px; margin: 0 auto; }

.face {
  border: 2px solid;
  border-color: #f8f8f8 #808080 #808080 #f8f8f8;
  background: linear-gradient(135deg, #cfcfcf, #b4b4b4);
}
.face:disabled { color: #f4f4f4; }

.logic {
  display: grid;
  grid-template-columns: 342px 60px 1fr;
  height: 398px;
  background: linear-gradient(#adadad, #e0e0e0 45%, #dcdcdc 55%, #acacac 92%);
  align-content: start;
}
.inputs { display: grid; gap: 18px; padding: 48px 0 0 44px; align-content: start; }
.input {
  display: flex;
  align-items: center;
  justify-content: flex-end;
  height: 22px;
  padding-right: 9px;
  gap: 6px;
  background: linear-gradient(#8e8e8e, #8e8e8e) center / 100% 3px no-repeat;
}
.input output { width: 110px; height: 22px; border: 1px solid #808080; background: #d4d4d4; line-height: 19px; text-align: center; }
.input.selected output { outline: 3px solid #74a4a0; }
.input .face { width: 29px; height: 22px; font: bold 12px/18px "Liberation Mono", monospace; }
.stub { justify-self: end; width: 9px; height: 3px; margin-top: 12px; background: #8e8e8e; }
.gate { padding-top: 10px; }
.gate-name {
  height: 31px;
  border: 2px solid #8c8cb0;
  background: linear-gradient(#0010f8, #1e98ff 50%, #0010f8);
  color: #001048;
  font: bold 14px/27px "Liberation Sans", sans-serif;
  text-align: center;
}
.gate-body { display: flex; flex-direction: column; gap: 18px; height: 318px; padding: 8px 0 0 9px; border: 2px solid #8e8e8e; border-top: 0; }
.bit { flex: none; width: 20px; height: 22px; border: 1px solid #808080; background: linear-gradient(135deg, #f0f0f0, #c4c4c4); }
.bit.bypass { background: linear-gradient(135deg, #0a68ff, #0838f0); color: #fff; font: bold 14px/20px "Liberation Sans", sans-serif; text-align: center; }
.result { display: flex; flex-direction: column; padding-top: 40px; }
.result .face { width: 25px; height: 30px; margin-left: 4px; }
.result .face svg { display: block; width: 21px; height: 26px; }
.outlet { height: 7px; margin-top: 126px; background: #fff; }
.logic-reset { grid-column: 1 / -1; justify-self: end; width: 128px; height: 22px; margin: 9px 10px 0 0; line-height: 18px; }

.operate { padding: 25px 4px 4px 10px; height: 90px; background: linear-gradient(#62aaa8, #a6ccca 50%, #a6ccca 62%, #64aaa8 92%); }
.operate-set { display: flex; gap: 30px; height: 34px; padding-left: 85px; border-bottom: 1px solid #6c8c8c; }
.operate-set .face { width: 110px; height: 22px; line-height: 18px; }
.operate-run { display: flex; align-items: center; gap: 6px; padding: 4px 5px 0 0; }
.operate-run span { flex: 1; }
.operate-run .face { width: 100px; height: 22px; line-height: 18px; }
.operate-run .face.pin { width: 21px; }
.pin svg { display: block; width: 15px; height: 14px; margin: 0 auto; }
.operate-run .focus { margin-left: 5px; }

.tip { position: absolute; left: 329px; top: 337px; width: 30px; height: 17px; border: 1px solid #000; background: #ffffe1; line-height: 15px; text-align: center; }

.first-out { left: 1059px; top: 163px; width: 509px; }
.first-out .titlebar { background: linear-gradient(90deg, #808080, #c0c0c0); color: #d8d4cc; }
.first-out .client {
  height: 514px;
  margin: 1px 0 1px;
  padding: 34px 5px 0 28px;
  border: 1px solid #404040;
  border-right-color: #fff;
  border-bottom-color: #fff;
  background: #4a4a4a;
  font: bold 15px/20px "Noto Sans CJK SC", sans-serif;
  color: #d8d8d8;
}
.first-out .ascii { font: bold 13px/22px "Liberation Mono", monospace; }
.causes { display: grid; grid-template-columns: 155px 155px 1fr; align-items: start; }
.causes ul { display: grid; gap: 23px; }
.causes ul:last-child { gap: 25px; }
.causes li, .state { display: flex; height: 20px; white-space: nowrap; }
.causes .lamp, .state .lamp { margin-right: 18px; }
.causes ul:nth-child(2) .lamp, .state:nth-child(2) .lamp { margin-right: 20px; }
.causes ul:last-child .lamp { margin-right: 35px; }
.reset-row { display: flex; justify-content: space-between; align-items: center; margin: 26px 115px 0 42px; }
.mode { display: flex; width: 105px; height: 15px; border: 1px solid #8c8c9c; }
.mode svg { width: 14px; height: 13px; background: #c8c8b8; }
.mode i { width: 15px; background: linear-gradient(#b8b8b8, #dcdcdc); }
.mode b { flex: 1; background: linear-gradient(#0010f0, #1e98ff 50%, #0010f0); }
.reset-row .classic { width: 110px; height: 40px; font: 12px/16px "Noto Sans CJK SC", sans-serif; }
.cause {
  height: 90px;
  margin: 41px 101px 0 78px;
  border: 1px solid #000;
  background: #f00;
  color: #500000;
  font: 300 20px/86px "Noto Sans CJK SC", sans-serif;
  text-align: center;
}
.causes-foot { display: flex; align-items: center; margin-top: 45px; }
.state { width: 155px; }
.state:nth-child(2) { flex: 1; }

/* ---------- key bar ---------- */
.keys {
  position: relative;
  display: flex;
  height: 60px;
  padding: 4px 0 0 80px;
  border-top: 1px solid #fff;
  box-shadow: inset 0 1px #909090;
  background: #c0c0c0;
}
.set { display: flex; }
.s35 { margin-left: 35px; }
.s40 { margin-left: 40px; }
.s47 { margin-left: 47px; }
.s58 { margin-left: 58px; }
.g12 { gap: 12px; }
.g17 { gap: 17px; }
.g29 { gap: 29px; }
.g32 { gap: 32px; }
.key { width: 49px; height: 50px; }
.key svg { display: block; width: 47px; height: 48px; }
.key.broad { width: 86px; }
.key.broad svg { width: 84px; }
.source {
  position: absolute;
  right: 10px;
  top: 30px;
  font: 16px/20px "Liberation Sans", sans-serif;
  color: rgba(240, 240, 240, .8);
  text-shadow: 1px 1px rgba(90, 90, 90, .35);
}
```
